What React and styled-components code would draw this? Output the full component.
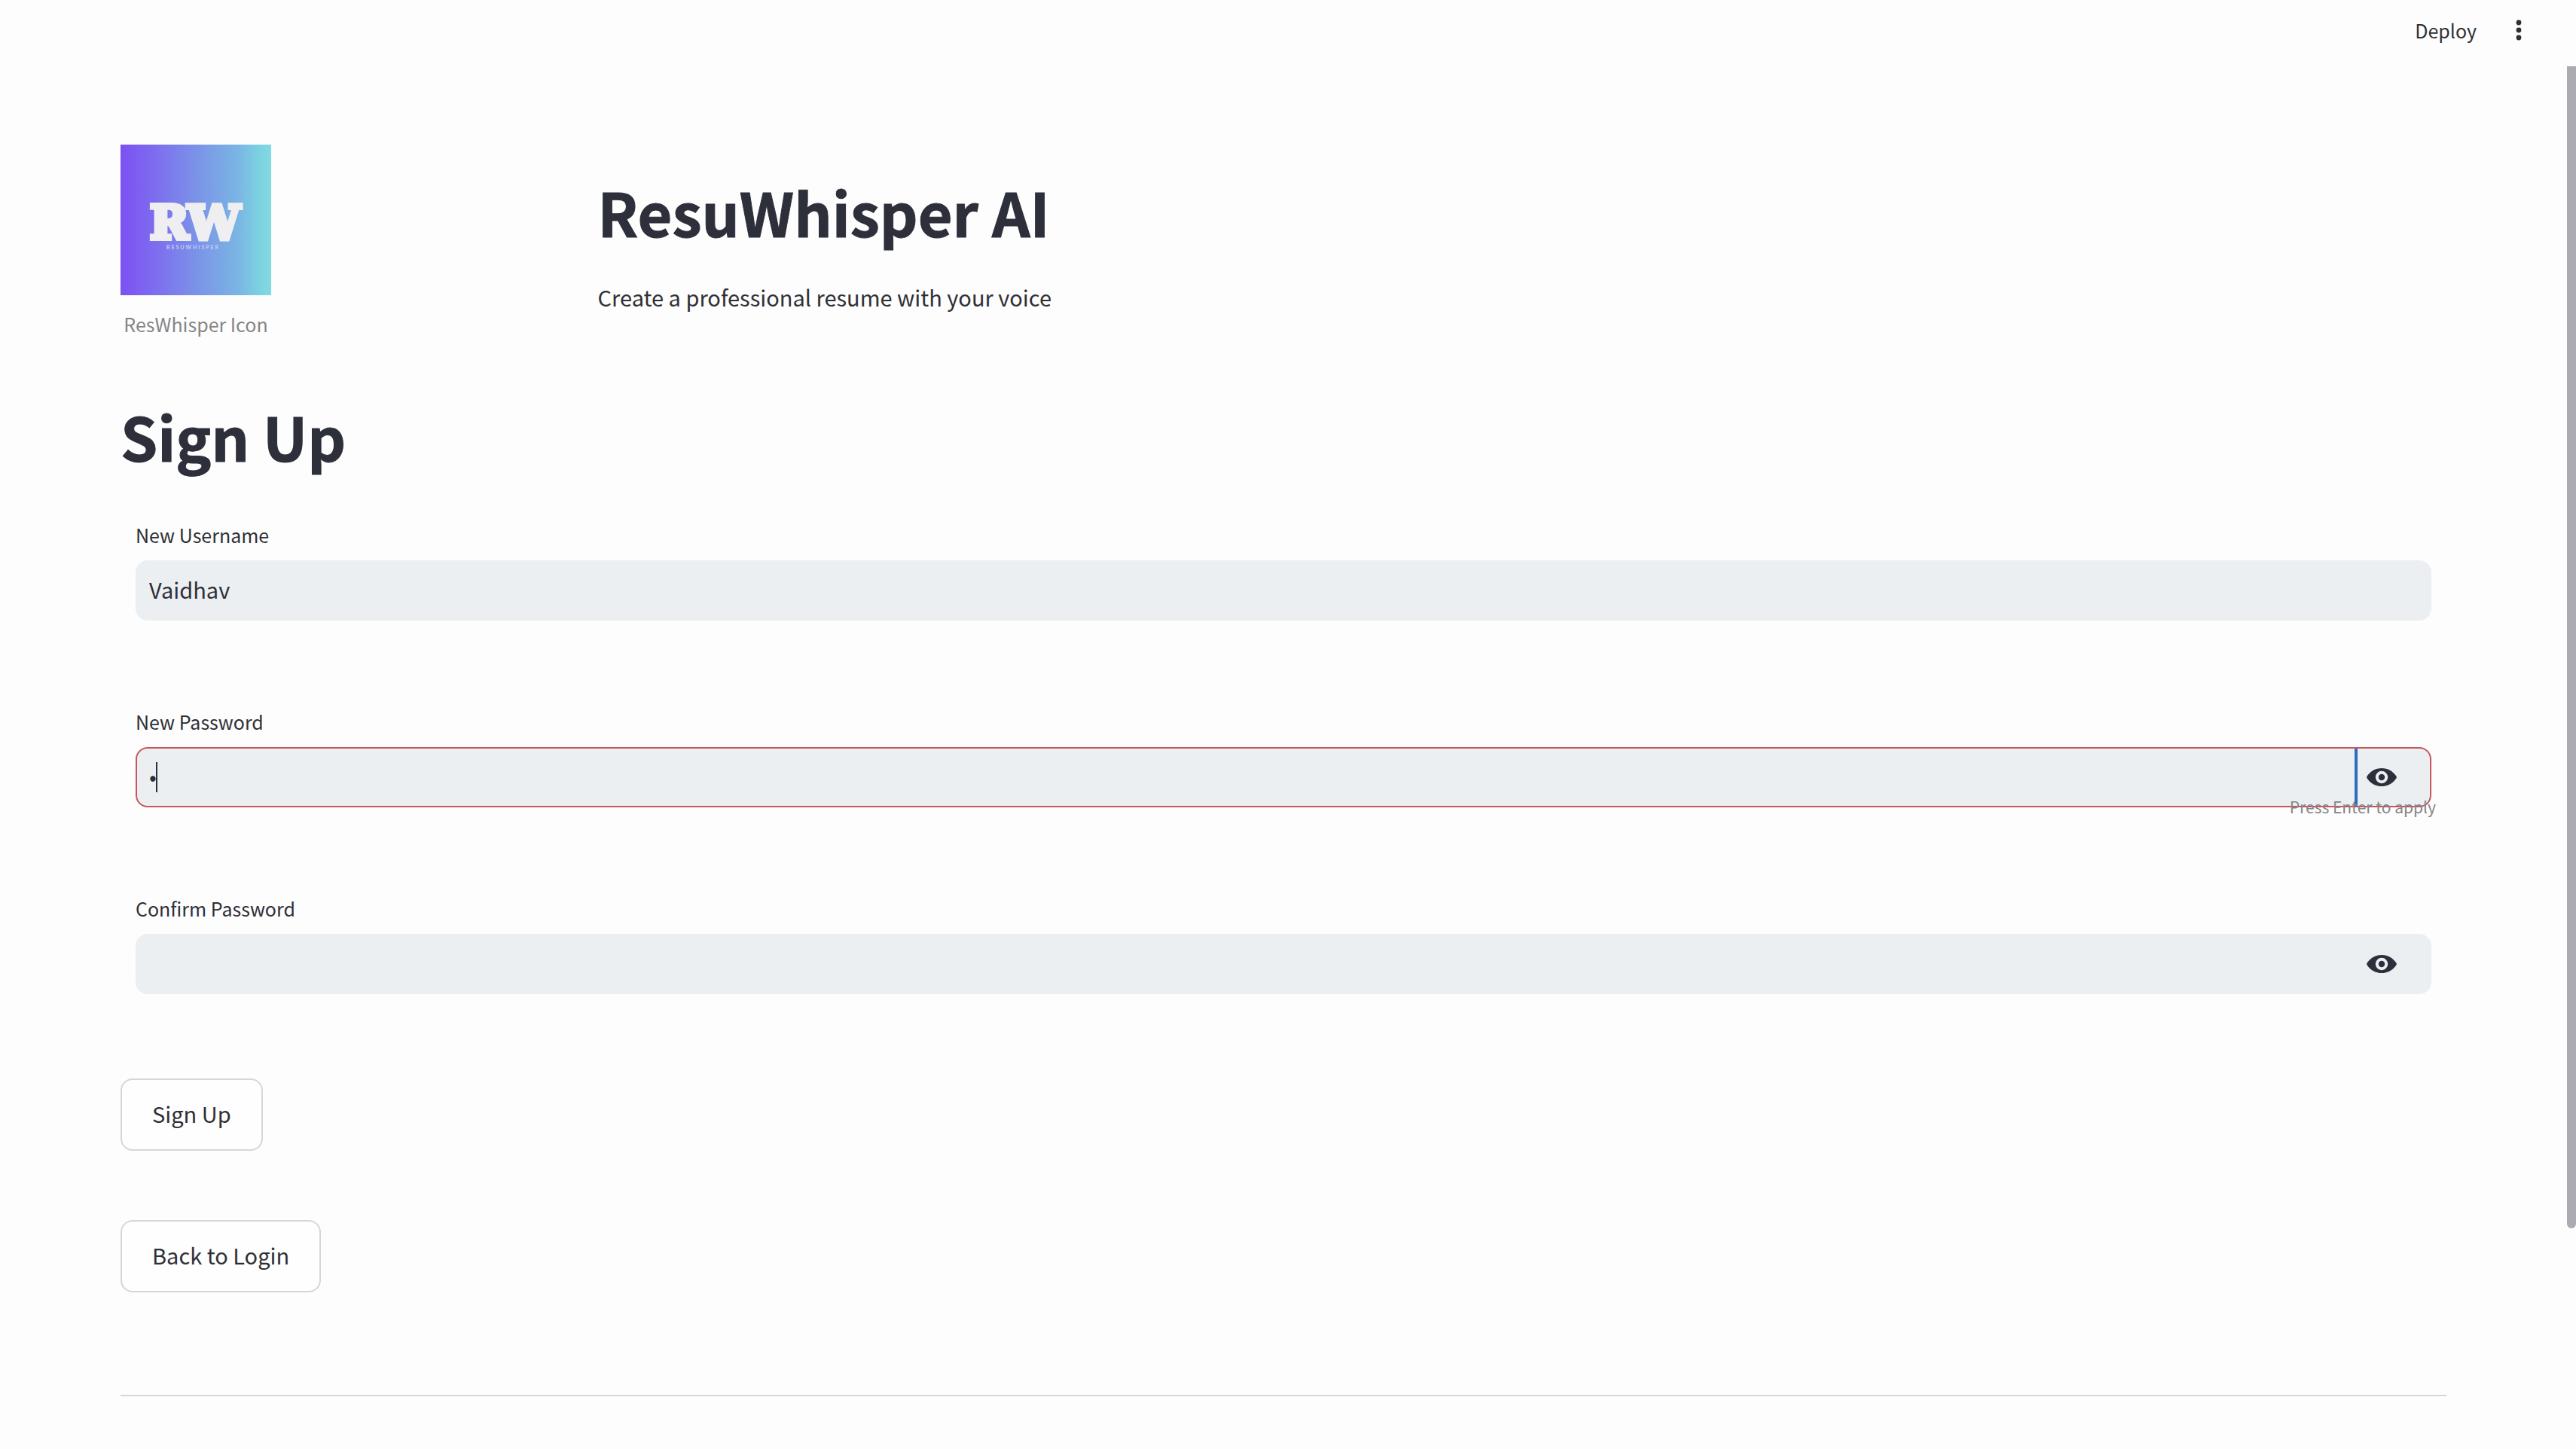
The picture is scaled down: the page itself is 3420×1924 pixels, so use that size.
import React, { useState } from "react";
import styled, { createGlobalStyle } from "styled-components";

const ink = "#2f3036";
const heading = "#2d2f3a";
const muted = "#858588";
const line = "#d6d6d8";
const field = "#ebeff2";
const sans = `"Noto Sans CJK JP", "Noto Sans CJK SC", "Noto Sans", sans-serif`;

const GlobalStyle = createGlobalStyle`
  * { box-sizing: border-box; }
  body {
    margin: 0;
    background: #fdfdfd;
    color: ${ink};
    font-family: ${sans};
  }
  h1, p, figure { margin: 0; }
  button, input { font-family: inherit; color: inherit; }
`;

const Page = styled.div`
  min-height: 100vh;
`;

const Toolbar = styled.header`
  display: flex;
  justify-content: flex-end;
  align-items: center;
  gap: 36px;
  height: 80px;
  padding-right: 56px;
`;

const ToolbarButton = styled.button`
  display: flex;
  align-items: center;
  justify-content: center;
  min-width: 40px;
  height: 40px;
  padding: 0;
  border: 0;
  background: none;
  font-size: 25px;
  line-height: 40px;
`;

const ScrollThumb = styled.div`
  position: fixed;
  top: 88px;
  right: 0;
  bottom: 293px;
  width: 12px;
  border-radius: 0 0 6px 6px;
  background: #acabb1;
`;

const Main = styled.main`
  padding: 112px 172px 40px 160px;
`;

const Intro = styled.section`
  display: grid;
  grid-template-columns: 1fr 4fr;
  gap: 20px;
  margin-bottom: 38px;
`;

const Brand = styled.figure`
  display: flex;
  flex-direction: column;
  gap: 16px;
  width: 200px;
`;

const Logo = styled.svg`
  display: block;
  width: 200px;
  height: 200px;
`;

const Caption = styled.figcaption`
  color: ${muted};
  font-size: 25px;
  line-height: 44px;
  text-align: center;
`;

const Title = styled.h1`
  padding: 36px 0;
  color: ${heading};
  font-size: 79px;
  font-weight: 700;
  line-height: 106px;
  -webkit-text-stroke: 1px ${heading};
`;

const Lead = styled.p`
  font-size: 29px;
  line-height: 48px;
`;

const Form = styled.form`
  padding-top: 22px;
`;

const Fields = styled.div`
  display: flex;
  flex-direction: column;
  gap: 114px;
  padding: 0 20px;
  margin-bottom: 112px;
`;

const Field = styled.div`
  position: relative;
  display: flex;
  flex-direction: column;
  gap: 14px;
`;

const Label = styled.label`
  font-size: 25px;
  line-height: 40px;
`;

const Box = styled.div`
  position: relative;
  display: flex;
  height: 80px;
  border: 2px solid ${(p) => (p.$active ? "#c9555c" : field)};
  border-radius: 16px;
  background: ${field};
  overflow: hidden;
`;

const Input = styled.input`
  flex: 1;
  min-width: 0;
  padding: 0 16px 4px;
  border: 0;
  outline: 0;
  background: none;
  font-size: 29px;
  line-height: 48px;
`;

const Caret = styled.span`
  position: absolute;
  top: 18px;
  left: 25px;
  width: 2px;
  height: 40px;
  background: ${ink};
`;

const Reveal = styled.button`
  display: flex;
  align-items: center;
  width: 100px;
  padding: 0 0 0 12px;
  border: 0;
  border-left: 4px solid ${(p) => (p.$active ? "#2a6fba" : "transparent")};
  background: none;
`;

const Hint = styled.span`
  position: absolute;
  right: -6px;
  bottom: -15px;
  color: ${muted};
  font-size: 21px;
  line-height: 32px;
`;

const Actions = styled.div`
  display: flex;
  flex-direction: column;
  align-items: flex-start;
  gap: 92px;
`;

const Button = styled.button`
  height: 96px;
  padding: 0 40px 4px;
  border: 2px solid ${line};
  border-radius: 16px;
  background: #fefefe;
  font-size: 29px;
  line-height: 48px;
`;

const Divider = styled.hr`
  height: 2px;
  margin: 136px 0 0;
  border: 0;
  background: ${line};
`;

function BrandLogo() {
  return (
    <Logo viewBox="0 0 200 200" role="img" aria-label="ResuWhisper logo">
      <defs>
        <linearGradient id="brand">
          <stop offset="0" stopColor="#7d50f3" />
          <stop offset="0.25" stopColor="#7d70ee" />
          <stop offset="0.5" stopColor="#7b92e8" />
          <stop offset="0.78" stopColor="#7ab5e4" />
          <stop offset="0.92" stopColor="#7cd2e1" />
          <stop offset="1" stopColor="#80dbe0" />
        </linearGradient>
      </defs>
      <rect width="200" height="200" fill="url(#brand)" />
      <text
        x="39"
        y="125"
        fill="#efeff2"
        stroke="#efeff2"
        strokeWidth="6"
        fontFamily="DejaVu Serif"
        fontWeight="700"
        fontSize="62"
      >
        RW
      </text>
      <text
        x="61"
        y="139"
        fill="#c5cdf2"
        fontFamily="Lato"
        fontWeight="700"
        fontSize="7"
        letterSpacing="2"
      >
        RESUWHISPER
      </text>
    </Logo>
  );
}

function EyeIcon() {
  return (
    <svg width="40" height="24" viewBox="0 0 40 24" aria-hidden="true">
      <path
        fill="#2d2f3b"
        fillRule="evenodd"
        d="M.6 10.6C5 4 12 0 20 0s15 4 19.400 10.600q.8 1.400 0 2.800C35 20 28 24 20 24S5 20 .6 13.400q-.8-1.400 0-2.800ZM20 3.800a8.200 8.200 0 1 0 0 16.400 8.200 8.200 0 0 0 0-16.400Zm0 4a4.200 4.200 0 1 1 0 8.400 4.200 4.200 0 0 1 0-8.400Z"
      />
    </svg>
  );
}

function DotsIcon() {
  return (
    <svg width="8" height="28" viewBox="0 0 8 28" fill={ink} aria-hidden="true">
      <circle cx="4" cy="4" r="3.400" />
      <circle cx="4" cy="14" r="3.400" />
      <circle cx="4" cy="24" r="3.400" />
    </svg>
  );
}

function PasswordField({ id, label, initial = "", active = false }) {
  const [value, setValue] = useState(initial);
  const [shown, setShown] = useState(false);
  return (
    <Field>
      <Label htmlFor={id}>{label}</Label>
      <Box $active={active}>
        <Input
          id={id}
          type={shown ? "text" : "password"}
          value={value}
          onChange={(e) => setValue(e.target.value)}
        />
        {active && <Caret />}
        <Reveal
          type="button"
          $active={active}
          aria-label="Show password text"
          onClick={() => setShown(!shown)}
        >
          <EyeIcon />
        </Reveal>
      </Box>
      {active && <Hint>Press Enter to apply</Hint>}
    </Field>
  );
}

export default function App() {
  const [name, setName] = useState("Vaidhav");
  return (
    <Page>
      <GlobalStyle />
      <Toolbar>
        <ToolbarButton type="button">Deploy</ToolbarButton>
        <ToolbarButton type="button" aria-label="Main menu">
          <DotsIcon />
        </ToolbarButton>
      </Toolbar>
      <ScrollThumb />
      <Main>
        <Intro>
          <Brand>
            <BrandLogo />
            <Caption>ResWhisper Icon</Caption>
          </Brand>
          <div>
            <Title>ResuWhisper AI</Title>
            <Lead>Create a professional resume with your voice</Lead>
          </div>
        </Intro>
        <Title>Sign Up</Title>
        <Form onSubmit={(e) => e.preventDefault()}>
          <Fields>
            <Field>
              <Label htmlFor="username">New Username</Label>
              <Box>
                <Input
                  id="username"
                  type="text"
                  value={name}
                  onChange={(e) => setName(e.target.value)}
                />
              </Box>
            </Field>
            <PasswordField id="password" label="New Password" initial="a" active />
            <PasswordField id="confirm" label="Confirm Password" />
          </Fields>
          <Actions>
            <Button type="submit">Sign Up</Button>
            <Button type="button">Back to Login</Button>
          </Actions>
        </Form>
        <Divider />
      </Main>
    </Page>
  );
}
